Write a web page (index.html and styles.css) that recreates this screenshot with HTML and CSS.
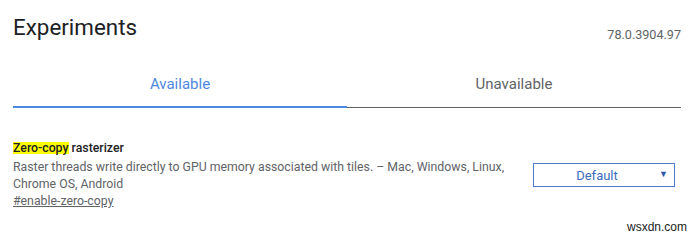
FILE: index.html
```html
<!DOCTYPE html>
<html lang="en">
<head>
  <meta charset="UTF-8">
  <meta name="viewport" content="width=device-width, initial-scale=1.0">
  <title>Experiments</title>
  <link rel="stylesheet" href="styles.css">
</head>
<body>
  <div class="page">
    <div class="header">
      <h1 class="title">Experiments</h1>
      <span class="version">78.0.3904.97</span>
    </div>

    <div class="tabs">
      <div class="tab active">Available</div>
      <div class="tab">Unavailable</div>
    </div>

    <div class="experiment">
      <div class="experiment-info">
        <h3 class="experiment-name"><mark>Zero-copy</mark> rasterizer</h3>
        <p class="experiment-desc">Raster threads write directly to GPU memory associated with tiles. – Mac, Windows, Linux, Chrome OS, Android</p>
        <a class="experiment-link" href="#enable-zero-copy">#enable-zero-copy</a>
      </div>
      <div class="select-wrap">
        <select class="experiment-select">
          <option>Default</option>
          <option>Enabled</option>
          <option>Disabled</option>
        </select>
        <span class="select-arrow">▼</span>
      </div>
    </div>
  </div>
  <div class="watermark">wsxdn.com</div>
</body>
</html>
```

FILE: styles.css
```css
body {
  font-family: Roboto, "Noto Sans", Arial, sans-serif;
  background-color: #fff;
  margin: 0;
  padding: 0;
}

.page {
  padding: 13px 19px 0 13px;
}

.header {
  display: flex;
  justify-content: space-between;
  align-items: flex-start;
}

.title {
  margin: 0;
  font-size: 22.4px;
  font-weight: 400;
  line-height: 28px;
  color: #202124;
}

.version {
  margin-top: 14px;
  font-size: 12.6px;
  line-height: 16px;
  color: #5f6368;
}

.tabs {
  display: flex;
  align-items: flex-end;
  margin-top: 31px;
}

.tab {
  flex: 1;
  text-align: center;
  font-size: 15px;
  line-height: 20px;
  color: #5f6368;
  padding-bottom: 13px;
  border-bottom: 1px solid #5f6368;
}

.tab.active {
  color: #4d88e0;
  padding-bottom: 12px;
  border-bottom: 2px solid #4d88e0;
}

.experiment {
  display: flex;
  align-items: center;
  margin-top: 32px;
}

.experiment-info {
  width: 510px;
  font-size: 12.3px;
  line-height: 17px;
}

.experiment-name {
  margin: 0;
  font-size: 12.3px;
  font-weight: 500;
  line-height: 16px;
  color: #202124;
}

.experiment-name mark {
  display: inline-block;
  line-height: 12px;
  background-color: #ffff00;
  color: #202124;
}

.experiment-desc {
  margin: 3px 0 0;
  font-size: 12.3px;
  line-height: 17px;
  color: #5f6368;
}

.experiment-link {
  display: block;
  font-size: 12.3px;
  line-height: 17px;
  color: #5f6368;
}

.select-wrap {
  position: relative;
  margin-left: auto;
  margin-right: 6px;
}

.experiment-select {
  appearance: none;
  -webkit-appearance: none;
  display: block;
  width: 142px;
  height: 24px;
  padding: 0 22px 0 8px;
  border: 1px solid #4a7cc7;
  border-radius: 0;
  background-color: #fff;
  font-family: Roboto, Arial, sans-serif;
  font-size: 13px;
  color: #3b6cc0;
  text-align: center;
  text-align-last: center;
}

.select-arrow {
  position: absolute;
  right: 7px;
  top: 6px;
  font-size: 9px;
  line-height: 10px;
  color: #2f5aa8;
  pointer-events: none;
}

.watermark {
  margin-top: 10px;
  padding-right: 13px;
  text-align: right;
  font-family: "Liberation Sans", Arial, sans-serif;
  font-size: 12px;
  line-height: 14px;
  color: #222;
}
```
